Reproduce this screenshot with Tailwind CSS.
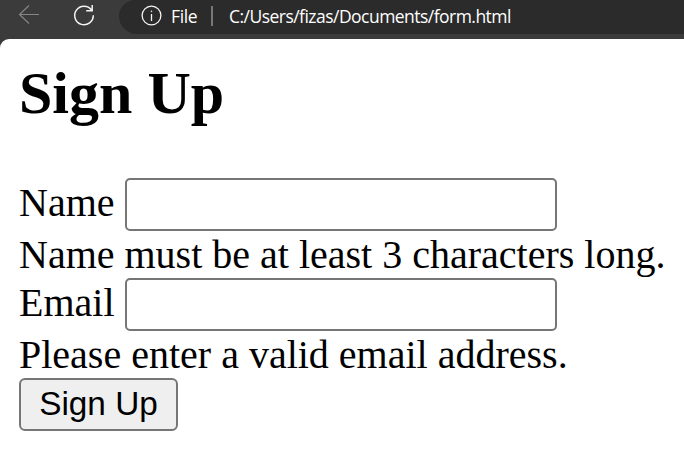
<!DOCTYPE html>
<html lang="en">
<head>
<meta charset="utf-8">
<title>Sign Up</title>
<script src="https://cdn.jsdelivr.net/npm/@tailwindcss/browser@4"></script>
</head>
<body class="w-[684px] h-[453px] overflow-hidden bg-[#3b3b3b] text-black">
<header class="flex h-[39px] items-start text-white">
  <svg class="w-[119px] h-[34px] shrink-0" viewBox="0 0 119 34" fill="none">
    <path d="M39 14.5H19.5M29 5.5L19.5 14.5L29 23.5" stroke="#858585" stroke-width="1.2"/>
    <path d="M91.5 10A9.3 9.3 0 1 0 93.3 15.3M92.2 5V10.7H86.2" stroke="#f4f4f4" stroke-width="1.5"/>
  </svg>
  <div class="flex h-[34px] grow items-start rounded-bl-[20px] rounded-tl-[18px] bg-[#2b2b2b] pl-[22px] font-['Open_Sans',sans-serif] text-[17.5px] leading-[32px]">
    <svg class="w-[21px] h-[32px] shrink-0" viewBox="0 0 21 32" fill="none" stroke="#f4f4f4" stroke-width="1.3">
      <circle cx="10.5" cy="15.5" r="9.4"/>
      <path d="M10.5 14V21"/>
      <circle cx="10.5" cy="11.3" r=".5" fill="#f4f4f4" stroke-width=".6"/>
    </svg>
    <span class="ml-[9px] w-[40px] tracking-[-0.4px]">File</span>
    <span class="mt-[6px] h-5 w-[1.5px] bg-[#777]"></span>
    <span class="ml-[16.5px] whitespace-nowrap tracking-[-0.53px]">C:/Users/fizas/Documents/form.html</span>
  </div>
</header>
<main class="h-[414px] rounded-tl-[9px] bg-white pl-[19px] font-['Liberation_Serif',serif] text-[40px] leading-[47px]">
  <h1 class="h-[139px] pt-[20px] text-[60px] font-bold leading-[69px]">Sign Up</h1>
  <form>
    <div class="flex h-[53px] items-start">
      <label for="name" class="w-[106px] pt-px">Name</label>
      <input id="name" class="h-[53px] w-[432px] rounded-[5px] border-2 border-[#767676] bg-white">
    </div>
    <p class="whitespace-nowrap">Name must be at least 3 characters long.</p>
    <div class="flex h-[53px] items-start">
      <label for="email" class="w-[106px] pt-px">Email</label>
      <input id="email" class="h-[53px] w-[432px] rounded-[5px] border-2 border-[#767676] bg-white">
    </div>
    <p class="whitespace-nowrap">Please enter a valid email address.</p>
    <button type="button" class="block h-[53px] w-[159px] whitespace-nowrap rounded-[6px] border-2 border-[#767676] bg-[#efefef] pb-[2px] font-['Liberation_Sans',sans-serif] text-[33.33px] leading-[47px]">Sign Up</button>
  </form>
</main>
</body>
</html>
